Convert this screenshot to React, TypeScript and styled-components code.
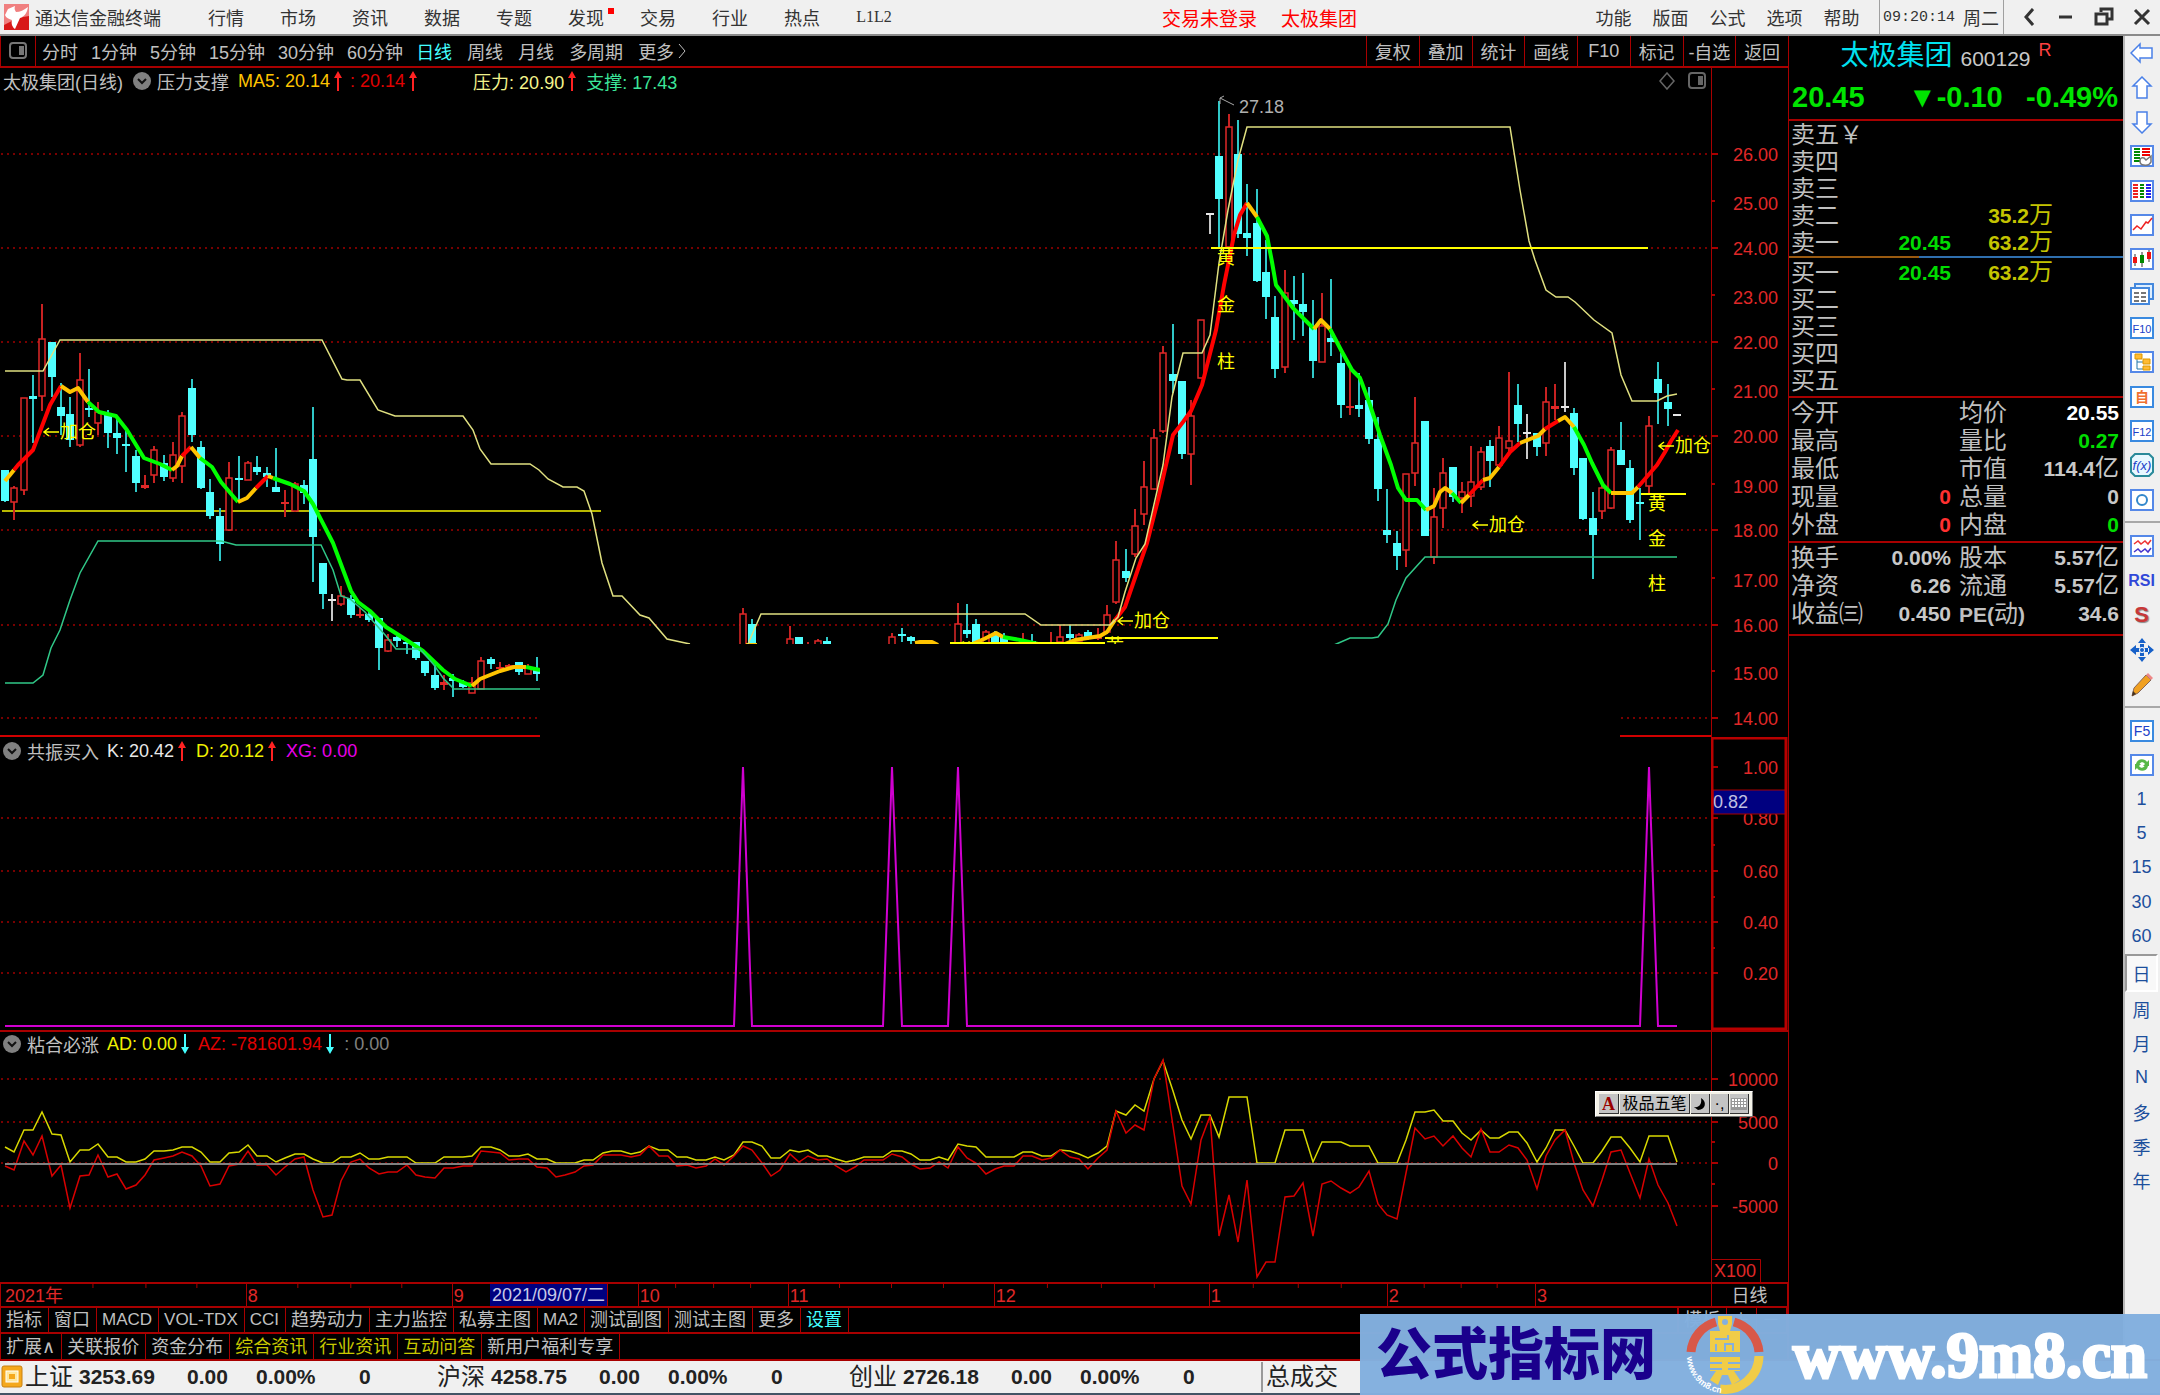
import React from "react";
import styled, { createGlobalStyle } from "styled-components";

const RED = "#a80000";
const sans = `"Liberation Sans", "Noto Sans CJK SC", sans-serif`;

const Global = createGlobalStyle`
  * { box-sizing: border-box; }
  body { margin: 0; background: #000; font-family: ${sans}; font-size: 18px; color: #c0c0c0; }
  button { font: inherit; color: inherit; background: none; border: 0; padding: 0; margin: 0; white-space: nowrap; cursor: pointer; }
  svg { display: block; }
  svg text { font-family: ${sans}; }
`;

/* ---------- data ---------- */

type Kind = "u" | "d" | "w";
// bar index, kind, body top, body bottom, wick top, wick bottom
type Candle = [number, Kind, number, number, number, number];

const CANDLES: Candle[] = [
  [0, "d", 470, 501, 470, 502], [1, "u", 488, 502, 486, 520], [2, "u", 398, 490, 398, 495], [3, "d", 396, 399, 375, 443],
  [4, "u", 339, 396, 304, 411], [5, "d", 342, 377, 342, 397], [6, "d", 407, 416, 383, 435], [7, "d", 414, 440, 397, 447],
  [8, "u", 380, 445, 353, 447], [9, "d", 408, 409, 369, 417], [10, "u", 412, 423, 402, 435], [11, "d", 415, 433, 410, 448],
  [12, "d", 433, 438, 418, 454], [13, "d", 444, 445, 430, 472], [14, "d", 456, 483, 450, 492], [15, "u", 485, 488, 475, 489],
  [16, "u", 450, 475, 446, 483], [17, "d", 463, 477, 455, 481], [18, "u", 455, 478, 442, 482], [19, "u", 416, 466, 412, 483],
  [20, "d", 388, 435, 379, 442], [21, "d", 447, 488, 441, 489], [22, "d", 492, 516, 479, 519], [23, "d", 516, 544, 508, 561],
  [24, "u", 478, 530, 462, 531], [25, "d", 478, 480, 456, 500], [26, "u", 463, 480, 461, 480], [27, "d", 467, 472, 456, 475],
  [28, "d", 473, 477, 467, 487], [29, "d", 487, 492, 448, 492], [30, "u", 502, 503, 490, 517], [31, "u", 484, 511, 482, 512],
  [32, "d", 485, 493, 480, 504], [33, "d", 459, 537, 407, 582], [34, "d", 563, 594, 563, 609], [35, "w", 599, 600, 594, 621],
  [36, "u", 596, 604, 586, 606], [37, "d", 599, 615, 595, 618], [38, "u", 614, 616, 608, 618], [39, "d", 614, 620, 612, 622],
  [40, "d", 618, 648, 618, 670], [41, "u", 640, 651, 634, 652], [42, "d", 637, 641, 636, 647], [43, "d", 642, 644, 640, 654],
  [44, "d", 642, 658, 642, 660], [45, "d", 661, 673, 661, 676], [46, "d", 675, 688, 665, 690], [47, "u", 682, 685, 675, 690],
  [48, "d", 678, 681, 674, 697], [49, "d", 682, 687, 680, 688], [50, "u", 683, 693, 677, 693], [51, "u", 661, 689, 657, 689],
  [52, "d", 659, 664, 657, 669], [53, "u", 667, 668, 662, 668], [54, "u", 665, 667, 664, 668], [55, "d", 662, 672, 662, 675],
  [56, "u", 668, 674, 664, 674], [57, "d", 669, 674, 657, 681],
  [79, "u", 614, 660, 608, 660], [80, "d", 624, 650, 619, 650], [84, "u", 639, 650, 626, 650], [85, "d", 637, 650, 637, 650],
  [86, "u", 648, 649, 642, 650], [87, "u", 641, 650, 639, 650], [88, "d", 641, 650, 637, 650], [95, "u", 637, 660, 633, 660],
  [96, "d", 634, 635, 628, 642], [97, "d", 637, 641, 636, 645], [102, "u", 624, 650, 603, 650], [103, "d", 630, 634, 604, 638],
  [104, "d", 624, 650, 619, 650], [105, "u", 632, 645, 630, 650], [106, "d", 635, 642, 631, 645], [107, "d", 636, 645, 633, 650],
  [109, "u", 640, 641, 633, 650], [110, "d", 641, 645, 634, 650], [112, "u", 644, 650, 632, 650], [113, "u", 637, 642, 625, 645],
  [114, "d", 634, 638, 625, 641], [115, "u", 635, 641, 633, 641], [116, "d", 632, 637, 630, 640], [117, "u", 637, 638, 628, 640],
  [118, "u", 615, 632, 605, 634], [119, "u", 560, 602, 541, 604], [120, "d", 571, 578, 549, 582], [121, "u", 526, 554, 509, 557],
  [122, "u", 487, 514, 461, 525], [123, "u", 438, 489, 429, 489], [124, "u", 353, 431, 346, 433], [125, "d", 374, 381, 324, 393],
  [126, "d", 381, 454, 381, 459], [127, "u", 416, 454, 400, 485], [128, "u", 320, 378, 320, 378], [129, "w", 213, 214, 213, 234],
  [130, "d", 156, 199, 101, 248], [131, "u", 127, 247, 114, 247], [132, "d", 154, 234, 120, 238], [133, "d", 233, 238, 184, 256],
  [134, "d", 223, 281, 189, 282], [135, "d", 272, 297, 240, 319], [136, "d", 317, 369, 296, 378], [137, "u", 293, 367, 270, 373],
  [138, "d", 300, 304, 276, 340], [139, "d", 304, 312, 273, 336], [140, "d", 327, 361, 300, 378], [141, "u", 326, 362, 293, 362],
  [142, "d", 338, 342, 279, 356], [143, "d", 363, 405, 353, 418], [144, "u", 406, 407, 367, 415], [145, "d", 405, 409, 373, 417],
  [146, "d", 400, 439, 387, 444], [147, "d", 439, 489, 417, 501], [148, "d", 530, 535, 489, 543], [149, "d", 543, 556, 531, 570],
  [150, "u", 474, 550, 474, 567], [151, "u", 443, 473, 397, 486], [152, "d", 421, 536, 421, 536], [153, "u", 517, 557, 488, 564],
  [154, "u", 473, 508, 458, 528], [155, "d", 467, 497, 467, 502], [156, "u", 492, 498, 482, 513], [157, "u", 482, 496, 446, 507],
  [158, "u", 452, 487, 447, 490], [159, "d", 446, 461, 440, 487], [160, "u", 438, 465, 426, 465], [161, "u", 441, 448, 372, 452],
  [162, "d", 405, 424, 384, 442], [163, "w", 432, 433, 414, 459], [164, "d", 433, 447, 433, 456], [165, "u", 402, 443, 387, 456],
  [166, "u", 406, 409, 384, 420], [167, "w", 406, 407, 362, 412], [168, "d", 413, 468, 408, 475], [169, "d", 458, 519, 458, 520],
  [170, "d", 518, 535, 492, 579], [171, "u", 488, 511, 482, 519], [172, "u", 450, 508, 447, 509], [173, "d", 450, 465, 422, 465],
  [174, "d", 468, 520, 460, 523], [175, "d", 502, 503, 488, 540], [176, "u", 426, 486, 416, 493], [177, "d", 379, 393, 362, 424],
  [178, "d", 402, 409, 384, 426], [179, "w", 414, 415, 414, 415],
];

const MA: [string, string][] = [
  ["#ffc400", "5,481 14,470"],
  ["#f00", "14,470 18,465 33,450 50,405 61,386"],
  ["#ffc400", "61,386 70,392 78,388 88,402"],
  ["#0f0", "88,402 99,412 116,416 127,430 144,458 160,464 172,470"],
  ["#ffc400", "172,470 177,466 182,456"],
  ["#f00", "182,456 191,447"],
  ["#ffc400", "191,447 200,458"],
  ["#0f0", "200,458 212,467 221,482 238,502"],
  ["#ffc400", "238,502 247,498 256,488"],
  ["#f00", "256,488 268,476"],
  ["#ffc400", "268,476 273,478"],
  ["#0f0", "273,478 290,484 304,491 313,504 333,543 351,591 358,602 370,611 386,627 405,639 423,651 443,670 455,679 472,686"],
  ["#ffc400", "472,686 480,679 500,671 514,667 526,667"],
  ["#0f0", "526,667 540,670"],
  ["#ffc400", "746,645 757,645"],
  ["#ffc400", "915,643 920,642 932,642 938,645"],
  ["#ffc400", "970,645 984,639 996,633 1003,637"],
  ["#0f0", "1003,637 1020,640 1038,644"],
  ["#ffc400", "1062,645 1075,640 1100,636 1107,632 1115,620"],
  ["#f00", "1115,620 1125,607 1136,575 1147,543 1158,500 1166,465 1173,435 1183,422 1191,411 1202,385 1216,330 1224,285 1234,235 1240,215 1247,203"],
  ["#ffc400", "1247,203 1257,217"],
  ["#0f0", "1257,217 1267,236 1272,262 1276,285 1293,308 1305,320 1314,329"],
  ["#ffc400", "1314,329 1321,320 1330,329"],
  ["#0f0", "1330,329 1341,350 1352,370 1360,378 1369,402 1380,435 1391,465 1398,488 1406,500 1417,500 1426,510"],
  ["#ffc400", "1426,510 1434,506 1440,492 1445,488 1452,493"],
  ["#0f0", "1452,493 1461,503"],
  ["#ffc400", "1461,503 1469,495"],
  ["#f00", "1469,495 1483,480"],
  ["#ffc400", "1483,480 1490,478 1499,467"],
  ["#f00", "1499,467 1510,452 1520,443"],
  ["#ffc400", "1520,443 1538,436 1545,429"],
  ["#f00", "1545,429 1558,421"],
  ["#ffc400", "1558,421 1565,417 1574,427"],
  ["#0f0", "1574,427 1584,445 1592,463 1603,485 1611,493"],
  ["#ffc400", "1611,493 1632,493 1638,487"],
  ["#f00", "1638,487 1657,465 1665,452 1671,441 1678,430"],
];

const PRESSURE = [
  "5,371 43,371 60,340 322,340 342,379 347,380 360,380 378,410 395,416 463,416 473,430 480,449 491,464 530,464 539,470 548,479 563,487 577,487 584,491 592,514 602,563 613,596 622,596 640,615 649,618 667,639 690,644",
  "748,644 761,614 1025,614 1041,625 1110,625 1118,617 1125,592 1136,558 1145,544 1155,500 1163,465 1172,397 1183,353 1202,353 1210,335 1219,263 1228,210 1238,160 1247,127 1510,127 1520,190 1529,241 1535,260 1546,290 1556,297 1568,297 1575,302 1594,320 1612,333 1621,375 1632,401 1657,401 1667,396 1677,394",
];
const SUPPORT = [
  "5,683 33,683 43,675 51,648 60,630 70,600 80,573 98,541 221,541 236,545 321,545 333,570 341,596 350,599 365,612 386,636 396,649 420,649 434,665 443,678 454,689 540,689",
  "1334,645 1350,638 1372,638 1378,637 1388,624 1396,600 1406,578 1425,557 1677,557",
];

const AD = [
  48, 32, 98, 98, 153, 86, 84, 2, 40, 40, 57, 18, 17, 2, 2, 12, 36, 37, 40, 48, 48, 32, 2, 2, 30, 32, 53, 22, 22, 2,
  15, 26, 27, 13, 0, 0, 17, 18, 30, 13, 13, 17, 17, 17, 0, 0, 0, 17, 17, 17, 20, 48, 48, 38, 22, 22, 26, 13, 13, 0,
  0, 0, 9, 9, 30, 36, 36, 26, 32, 52, 40, 39, 17, 17, 10, 10, 17, 10, 24, 62, 62, 50, 14, 14, 40, 32, 40, 22, 22, 12,
  2, 8, 17, 17, 17, 36, 36, 26, 8, 8, 18, 8, 58, 50, 48, 17, 17, 17, 17, 32, 32, 22, 22, 40, 37, 28, 14, 30, 50, 157,
  145, 175, 155, 252, 305, 215, 130, 72, 143, 143, 77, 198, 198, 198, 0, 0, 0, 98, 98, 98, 2, 62, 62, 62, 50, 50, 50, 0, 0, 0,
  70, 152, 152, 160, 127, 127, 90, 68, 100, 75, 75, 94, 94, 60, 2, 45, 98, 98, 50, 0, 0, 35, 77, 77, 45, 2, 81, 81, 81, 2,
];
const AZ = [
  -10, -22, 67, 23, 80, -40, -5, -136, -40, -35, 25, -41, -32, -78, -67, -35, 8, 14, 20, 32, 22, -10, -68, -64, -10, -4, 36, -5, -5, -37,
  -12, 13, 17, -80, -162, -155, -55, 3, 13, -15, -33, -27, -28, -6, -37, -42, -46, -15, -15, -10, -10, 36, 34, 30, 10, 12, 12, -13, -15, -41,
  -36, -28, -10, -6, 25, 25, 24, 17, 25, 52, 22, 22, -10, -6, -15, -10, 12, -5, 22, 52, 38, 0, -38, -22, 27, 2, 22, 10, 12, -8,
  -28, -12, 9, 9, 9, 27, 18, -4, -19, -14, 3, -14, 48, 14, 0, -32, -18, -10, -8, 22, 22, 10, 14, 40, 18, 12, -18, 14, 40, 157,
  90, 115, 98, 252, 308, 110, -68, -122, 70, 140, -220, -95, -238, -50, -342, -297, -297, -103, -98, -60, -220, -63, -55, -75, -91, -73, -23, -122, -157, -167,
  -30, 106, 72, 80, 50, 80, 45, 18, 102, 32, 32, 54, 45, 8, -77, 20, 68, 98, 0, -80, -130, -50, 32, 40, -30, -104, 12, -65, -120, -190,
];

const barX = (i: number) => Math.round(5 + i * 9.34);
const seriesPoints = (v: number[]) => v.map((n, i) => `${barX(i)},${Math.round(1163 - n / 3)}`).join(" ");
const SPIKES = [79, 95, 102, 176];
const spikePoints = ["5,1026", ...SPIKES.flatMap((i) => [`${barX(i - 1)},1026`, `${barX(i)},767`, `${barX(i + 1)},1026`]), "1677,1026"].join(" ");

/* ---------- frame ---------- */

const Shell = styled.div`display: flex; flex-direction: column; min-height: 100vh; background: #000; position: relative;`;
const Body = styled.div`display: flex; flex: 1;`;
const Main = styled.main`flex: 1; min-width: 0;`;

const MenuBar = styled.header`
  display: flex; align-items: center; height: 36px; background: #f0f0f0; color: #333;
  border-bottom: 2px solid #8a8a8a;
`;
const Brand = styled.div`display: flex; align-items: center; gap: 6px; width: 190px; padding-left: 4px; white-space: nowrap;`;
const MenuItem = styled.button<{ $w?: number }>`width: ${(p) => p.$w ?? 72}px; position: relative;`;
const LatinItem = styled(MenuItem)`font: 16px "Liberation Serif", serif;`;
const Dot = styled.i`position: absolute; top: 4px; right: 8px; width: 6px; height: 6px; background: #f00;`;
const Alerts = styled.div`display: flex; gap: 24px; flex: 1; justify-content: center; color: #f00; font-size: 19px; padding-left: 24px;`;
const Clock = styled.div`
  display: flex; align-items: center; gap: 8px; align-self: stretch; width: 125px; padding-left: 3px; margin-left: 9px;
  border-left: 1px solid #a0a0a0; border-right: 1px solid #a0a0a0; white-space: nowrap;
`;
const Time = styled.time`font: 15px "Liberation Mono", monospace;`;
const WinButtons = styled.div`display: flex; justify-content: space-around; width: 156px; padding-left: 6px;`;

const Toolbar = styled.nav`
  display: flex; height: 32px; border-bottom: 2px solid ${RED}; border-left: 1px solid ${RED};
`;
const PanelToggle = styled.button`width: 35px; border-right: 1px solid ${RED}; display: grid; place-items: center;`;
const Periods = styled.div<{ $gap: number }>`display: flex; align-items: center; gap: ${(p) => p.$gap}px; padding-left: ${(p) => (p.$gap === 13 ? 6 : 13)}px;`;
const Period = styled.button<{ $on?: boolean }>`display: flex; align-items: center; gap: 4px; color: ${(p) => (p.$on ? "#4ff" : "#c0c0c0")};`;
const Actions = styled.div`display: flex; width: 422px; margin-left: auto;`;
const Action = styled.button`flex: 1; border-left: 1px solid ${RED};`;

const Panel = styled.section<{ $line?: boolean }>`
  display: grid; grid-template-columns: minmax(0, 1fr) 77px; position: relative;
  ${(p) => p.$line && `border-top: 2px solid ${RED};`}
`;
const Plot = styled.div`min-width: 0;`;
const PlotHead = styled.div<{ $h: number }>`
  display: flex; align-items: center; height: ${(p) => p.$h}px; padding-left: 3px; white-space: nowrap;
`;
const Read = styled.span<{ $c?: string; $gap?: number }>`
  color: ${(p) => p.$c ?? "#c0c0c0"}; margin-left: ${(p) => p.$gap ?? 0}px;
`;
const HeadTools = styled.div`display: flex; gap: 12px; margin-left: auto; padding-right: 5px;`;
const Canvas = styled.svg`width: 100%; height: auto;`;

/* ---------- bottom ---------- */

const DateAxis = styled.div`
  display: grid; grid-template-columns: minmax(0, 1fr) 77px; height: 24px; position: relative;
  border-top: 2px solid ${RED}; border-left: 1px solid ${RED}; line-height: 24px;
`;
const Months = styled.div`display: flex; color: #e02828;`;
const Month = styled.div<{ $n: number }>`
  flex: ${(p) => p.$n} 0 0; min-width: 0; text-indent: 1px;
  & + & { border-left: 1px solid ${RED}; }
  &:first-child { text-indent: 4px; }
`;
const AxisMode = styled.div`border-left: 1px solid ${RED}; border-right: 1px solid ${RED}; text-align: center;`;
const Ticks = styled.svg`position: absolute; left: 0; top: 0; width: 100%; height: 4px;`;
const CursorDate = styled.div`
  position: absolute; left: 489px; top: 0; width: 118px; height: 22px; line-height: 22px; text-align: center;
  background: #000080; color: #c8c8e8; border-right: 1px solid ${RED}; white-space: nowrap;
`;
const Tabs = styled.nav<{ $h: number }>`
  display: flex; height: ${(p) => p.$h}px; border-top: 2px solid ${RED}; border-right: 1px solid ${RED}; border-left: 1px solid ${RED};
`;
const Tab = styled.button<{ $c?: string; $latin?: boolean }>`
  padding: 0 6px 0 5px; border-right: 1px solid ${RED}; color: ${(p) => p.$c ?? "#c0c0c0"};
  font-family: "Liberation Sans", "DejaVu Sans", "Noto Sans CJK SC", sans-serif;
  font-size: ${(p) => (p.$latin ? 17 : 18)}px; line-height: 22px;
`;
const TabsEnd = styled.div`display: flex; margin-left: auto; border-left: 2px solid ${RED};`;

const Status = styled.footer`
  display: flex; align-items: center; height: 36px; background: #f0f0f0; color: #222; border-top: 2px solid ${RED};
  border-bottom: 2px solid #456; padding-left: 1px; font-weight: bold; font-size: 21px; white-space: nowrap;
`;
const IndexQuote = styled.div`
  display: grid; grid-template-columns: 54px 108px 69px 103px 78px; align-items: center; width: 412px;
`;
const Cjk = styled.span`font-size: 24px; font-weight: normal; line-height: 30px; td & { line-height: 0; }`;
const Turnover = styled.div`border-left: 2px solid #999; padding-left: 3px;`;

/* ---------- quote panel ---------- */

const Quote = styled.aside`width: 335px; border-left: 1px solid ${RED};`;
const Title = styled.h1`
  display: flex; align-items: center; justify-content: center; gap: 8px; height: 40px; margin: 0; padding-right: 20px;
  font-weight: normal; white-space: nowrap;
`;
const StockName = styled.span`font-size: 28px; line-height: 36px; color: #00e0f0;`;
const Code = styled.span`font-size: 21px; color: #c8c8c8; padding-top: 5px;`;
const Mark = styled.sup`font-size: 18px; color: #ff4040; line-height: 18px; align-self: flex-start; padding-top: 5px;`;
const Prices = styled.div`
  display: flex; justify-content: space-between; align-items: center; height: 43px; padding: 0 5px 0 3px;
  color: #00e400; font-size: 29px; font-weight: bold;
`;
const Change = styled.span`padding-left: 20px;`;
const Table = styled.table<{ $row: number }>`
  width: 100%; table-layout: fixed; border-collapse: collapse; font-size: 21px; font-weight: bold;
  tr { height: ${(p) => p.$row}px; }
  th, td { padding: 0; line-height: ${(p) => p.$row}px; white-space: nowrap; }
  th { font-size: 24px; font-weight: normal; text-align: left; }
`;
const Block = styled.div<{ $pt?: number; $pb?: number }>`
  border-top: 2px solid ${RED}; padding: ${(p) => p.$pt ?? 0}px 4px ${(p) => p.$pb ?? 0}px 2px;
`;
const Bids = styled(Block)`
  border-top: 2px solid; border-image: linear-gradient(90deg, #9a5a10 39%, #2f6fae 39%) 1;
`;
const End = styled.div`border-top: 2px solid ${RED};`;
const Num = styled.td<{ $c?: string }>`text-align: right; color: ${(p) => p.$c ?? "#c8c8c8"};`;
const StatName = styled.th`&& { padding-left: 8px; } b { font-size: 21px; line-height: 0; }`;
const PriceCol = styled.col`width: 80px;`;
const VolumeCol = styled.col`width: 102px;`;

/* ---------- tool rail ---------- */

const Rail = styled.nav`width: 37px; background: #f0f0f0; border-left: 2px solid #b8b8b8; color: #1c4f9c;`;
const RailGroup = styled.div<{ $h: number }>`
  display: flex; flex-direction: column; height: ${(p) => p.$h}px; padding-right: 2px;
  & + & { border-top: 2px solid #a8a8a8; margin-top: 4px; padding-top: 6px; }
`;
const RailButton = styled.button<{ $on?: boolean }>`
  flex: 1; display: grid; place-items: center; width: 100%; color: #1c4f9c;
  ${(p) => p.$on && `background: #f8f8f8; border: 2px solid #fff; border-top-color: #999; border-left-color: #999;`}
`;
const RailWord = styled.span`font-size: 16px; font-weight: bold; color: #3048d8;`;
const RailLetter = styled.b`
  font-size: 22px; line-height: 26px; color: #c83838; text-shadow: 1px 1px 1px #888;
`;

/* ---------- overlays ---------- */

const Ime = styled.div`
  position: absolute; right: 35px; top: 59px; display: flex; gap: 1px; height: 26px; padding: 2px 3px;
  background: #f4f2e8; border: 1px solid #fff; border-right-color: #777; border-bottom-color: #777; color: #000;
`;
const ImeButton = styled.button<{ $w: number }>`
  width: ${(p) => p.$w}px; height: 20px; display: grid; place-items: center; background: #c4c4c4; font-size: 16px; line-height: 18px;
  border-right: 1px solid #333; border-bottom: 1px solid #333;
`;
const ImeLetter = styled.b`font: bold 18px "Liberation Serif", serif; line-height: 18px; color: #900;`;
const Banner = styled.div`
  position: absolute; right: 0; bottom: 0; width: 800px; height: 81px; background: rgba(131, 175, 222, 0.98);
  display: flex; align-items: center; padding: 0 13px 0 16px; justify-content: space-between; white-space: nowrap;
`;
const BannerName = styled.span`font-size: 56px; line-height: 76px; font-weight: 900; color: #1a008c;`;
const BannerUrl = styled.a`
  font: bold 65px "Liberation Serif", serif; line-height: 76px; color: #fff; text-decoration: none; -webkit-text-stroke: 3px #fff;
`;

/* ---------- small drawings ---------- */

const Arrow = ({ down, gap = 3 }: { down?: boolean; gap?: number }) => (
  <svg width={9 + gap} height="20" viewBox={`${-gap} 0 ${9 + gap} 20`}>
    {down ? <path d="M4 0h2v13h3l-4 7-4-7h3z" fill="#4ff" /> : <path d="M4 20h2V7h3L5 0 1 7h3z" fill="#f22" />}
  </svg>
);
const Chevron = () => (
  <svg width="18" height="18" viewBox="0 0 18 18">
    <circle cx="9" cy="9" r="9" fill="#808080" /><path d="M5 7l4 4 4-4" fill="none" stroke="#111" strokeWidth="2" />
  </svg>
);
const SplitIcon = ({ c = "#777" }: { c?: string }) => (
  <svg width="18" height="18" viewBox="0 0 18 18">
    <rect x="1" y="1" width="16" height="15" rx="3" fill="none" stroke={c} strokeWidth="2" /><path d="M10 4h5v9h-5z" fill={c} />
  </svg>
);
const Brandmark = () => (
  <svg width="25" height="26" viewBox="0 0 25 26">
    <path d="M0 0h25v26H0z" fill="#d81818" /><path d="M0 0h25v12Q14 13 0 21z" fill="#f08080" />
    <path d="M1 11L4 5l7-3c-1 3 0 4 1 6 4 0 8-2 12-5-1 6-3 9-8 11l-5 11c-3-2-4-6-3-9-3-1-6-2-7-5z" fill="#fff" />
  </svg>
);

const Frame = ({ children, c = "#5588e8" }: { children?: React.ReactNode; c?: string }) => (
  <svg width="24" height="24" viewBox="0 0 24 24">
    <rect x="1" y="2" width="22" height="20" fill="#fff" stroke={c} strokeWidth="2" />{children}
  </svg>
);
const Dashes = ({ x, c, y = 6, w = 5 }: { x: number; c: string; y?: number; w?: number }) => (
  <path d={[0, 3, 6, 9, 12].map((d) => `M${x} ${y + d}h${w}`).join("")} stroke={c} strokeWidth="2" />
);
const ArrowBox = ({ r }: { r: number }) => (
  <svg width="24" height="24" viewBox="0 0 24 24">
    <path d="M12 1l9 9h-4v12H7V10H3z" transform={`rotate(${r} 12 12)`} fill="#fff" stroke="#4a80e8" strokeWidth="1.5" />
  </svg>
);
const glyph = (t: string, c = "#2040c8") => (
  <Frame c="#3a8ae0"><text x="12" y="17" fontSize={t.length > 2 ? 11 : 14} textAnchor="middle" fill={c} fontWeight={t === "自" ? 700 : 400}>{t}</text></Frame>
);

const RAIL_TOP: [string, React.ReactNode][] = [
  ["后退", <ArrowBox r={-90} />],
  ["上翻", <ArrowBox r={0} />],
  ["下翻", <ArrowBox r={180} />],
  ["自选报价", <Frame><Dashes x={4} c="#080" y={5} w={6} /><path d="M12 5h8M12 8h8M12 11h8" stroke="#e00" strokeWidth="2" /><path d="M10 17q0-4 4-3l2 2 5-4v6q-2 4-7 3-4 0-4-4z" fill="#fff" stroke="#777" strokeWidth="1.5" /></Frame>],
  ["行情表", <Frame><Dashes x={3} c="#e22" /><Dashes x={10} c="#080" w={4} /><Dashes x={16} c="#22e" /></Frame>],
  ["分时图", <Frame><path d="M3 17l4-4 4 3 5-7 2 1 4-5" fill="none" stroke="#e22" strokeWidth="1.5" /></Frame>],
  ["K线图", <Frame><path d="M5 7v12M12 5v15M19 3v12" stroke="#333" /><path d="M3 10h4v6H3zM17 5h4v7h-4z" fill="#e11" /><path d="M10 8h4v8h-4z" fill="#080" /></Frame>],
  ["多窗口", <svg width="26" height="24" viewBox="0 0 26 24"><rect x="6" y="2" width="18" height="15" fill="#def" stroke="#48d" strokeWidth="2" /><rect x="2" y="6" width="18" height="16" fill="#fff" stroke="#48d" strokeWidth="2" /><path d="M5 11h5m2 0h5M5 15h5m2 0h5M5 19h5m2 0h5" stroke="#777" strokeWidth="2" /></svg>],
  ["F10", glyph("F10")],
  ["树形", <Frame><path d="M7 8v11h7M7 12h7" fill="none" stroke="#27a" /><path d="M5 4h7v5H5zM13 9h7v5h-7zM13 16h7v4h-7z" fill="#fb3" stroke="#d90" /></Frame>],
  ["自选", glyph("自", "#f07030")],
  ["F12", glyph("F12")],
  ["公式", <svg width="24" height="24" viewBox="0 0 24 24"><path d="M5 1h14l4 4v14l-4 4H5l-4-4V5z" fill="#e8f8ff" stroke="#2a8a9a" strokeWidth="2" /><text x="12" y="17" fontSize="13" fontStyle="italic" textAnchor="middle" fill="#2040c8">f(x)</text></svg>],
  ["循环", <Frame><circle cx="12" cy="12" r="5" fill="none" stroke="#38c" strokeWidth="2" /></Frame>],
];
const RAIL_MID: [string, React.ReactNode][] = [
  ["指标", <Frame><path d="M4 10l4-3 3 3 4-3 3 3 3-4" fill="none" stroke="#e33" strokeWidth="1.5" /><path d="M4 18l4-3 3 3 4-3 3 3 3-4" fill="none" stroke="#43c" strokeWidth="1.5" /></Frame>],
  ["RSI", <RailWord>RSI</RailWord>],
  ["资金", <RailLetter>S</RailLetter>],
  ["移动", <svg width="24" height="24" viewBox="0 0 24 24"><path d="M12 0l4 5H8zM12 24l4-5H8zM0 12l6-5v10zM24 12l-6-5v10zM10 6h4v12h-4zM5 10h14v4H5z" fill="#1660c8" /><circle cx="12" cy="12" r="3" fill="#fff" /><circle cx="12" cy="12" r="2" fill="#1660c8" /></svg>],
  ["画线", <svg width="24" height="26" viewBox="0 0 24 26"><path d="M2 24l2-8L16 3l5 5L8 21z" fill="#f0a020" stroke="#865" /><path d="M16 3l2-2 5 5-2 2z" fill="#e88" /><path d="M2 24l1-5 3 3z" fill="#432" /></svg>],
];
const RAIL_LOW: [string, React.ReactNode][] = [
  ["F5", glyph("F5")],
  ["刷新", <Frame><path d="M6 11c1-6 9-6 11-2l2-2v6h-6l2-2c-2-3-5-2-6 1zM18 13c-1 6-9 6-11 2l-2 2v-6h6l-2 2c2 3 5 2 6-1z" fill="#58b848" /></Frame>],
  ...["1", "5", "15", "30", "60", "日", "周", "月", "N", "多", "季", "年"].map((t): [string, React.ReactNode] => [t, t]),
];

const Logo = () => (
  <svg width="78" height="78" viewBox="-39 -39 78 78">
    <path d="M-34 -3A34 34 0 0 1 -9 -33M9 -33A34 34 0 0 1 34 -3" fill="none" stroke="#d85848" strokeWidth="9" />
    <path d="M34 1A34 34 0 0 1 -5 34" fill="none" stroke="#f0cc48" strokeWidth="9" />
    <path d="M-7 -39H7V-31L5 -24H15V-3H-15V-24H-5L-7 -31zM-15 2H15V16h-6l6 9-8 5-4-10h-6l-4 10-8-5 6-9h-6z" fill="#f0cc48" />
    <circle cy="-33" r="3" fill="#83afde" />
    <path d="M-10 -16h13v-4M-9 -4v-7M0 -4v-7h8v7M-15 8h12m6 0h12M-15 14H-3m6 0h12" fill="none" stroke="#83afde" strokeWidth="2" />
    <path id="logoArc" d="M-38 2A38 38 0 0 0 -4 38" fill="none" />
    <text fontSize="9" fontWeight="700" fill="#fff"><textPath href="#logoArc">www.9m8.cn</textPath></text>
  </svg>
);

/* ---------- charts ---------- */

const Grid = ({ ys, from = 1, to = 1711 }: { ys: number[]; from?: number; to?: number }) => (
  <path d={ys.map((y) => `M${from} ${y}H${to}`).join("")} stroke="#780000" strokeWidth="2" strokeDasharray="2 4" shapeRendering="crispEdges" />
);

const COLOR = { u: "#e02828", d: "#50ffff", w: "#e8e8e8" };
const WICK = { u: "#c82222", d: "#30c8c8", w: "#c8c8c8" };
const Bar = ({ c: [i, k, top, bottom, hi, lo] }: { c: Candle }) => {
  const x = barX(i), col = COLOR[k], h = bottom - top;
  const hollow = k === "u" && h > 3;
  return (
    <g>
      {hollow
        ? <path d={`M${x} ${hi}V${top}M${x} ${bottom}V${lo}`} stroke={WICK[k]} strokeWidth="2" />
        : <path d={`M${x} ${hi}V${lo}`} stroke={WICK[k]} strokeWidth="2" />}
      {hollow
        ? <rect x={x - 3} y={top} width="6" height={h} fill="#000" stroke={col} strokeWidth="1.5" />
        : <rect x={x - 4} y={top} width="8" height={Math.max(h, 2)} fill={col} />}
    </g>
  );
};

const AddMark = ({ x, y }: { x: number; y: number }) => (
  <g fill="#ff0">
    <path d={`M${x} ${y}h15M${x + 5} ${y - 4}l-5 4 5 4`} fill="none" stroke="#ff0" strokeWidth="1.5" />
    <text x={x + 16} y={y + 6} fontSize="18">加仓</text>
  </g>
);
const Pillar = ({ x, ys }: { x: number; ys: number[] }) => (
  <g fill="#ff0" fontSize="18" textAnchor="middle">{ys.map((y, i) => <text key={y} x={x} y={y + 7}>{"黄金柱"[i]}</text>)}</g>
);

const PriceChart = () => (
  <Canvas viewBox="0 94 1711 643">
    <Grid ys={[154, 248, 342, 436, 530, 625, 718]} />
    <path d="M2 511H601" stroke="#b8b800" strokeWidth="2" />
    <g>{CANDLES.map((c) => <Bar key={c[0]} c={c} />)}</g>
    {MA.map(([c, p], i) => <polyline key={i} points={p} fill="none" stroke={c} strokeWidth="4" strokeLinejoin="round" />)}
    {PRESSURE.map((p) => <polyline key={p} points={p} fill="none" stroke="#e0e080" strokeWidth="1.5" />)}
    {SUPPORT.map((p) => <polyline key={p} points={p} fill="none" stroke="#30c888" strokeWidth="1.5" />)}
    <path d="M1211 248H1648M1105 638H1218M950 643H1105M1641 494H1686" stroke="#ff0" strokeWidth="2" shapeRendering="crispEdges" />
    <AddMark x={44} y={432} />
    <AddMark x={1118} y={621} />
    <AddMark x={1473} y={525} />
    <AddMark x={1659} y={446} />
    <Pillar x={1226} ys={[257, 304, 361]} />
    <Pillar x={1657} ys={[503, 538, 583]} />
    <Pillar x={1115} ys={[645]} />
    <Pillar x={966} ys={[650]} />
    <path d="M1220 98l14 7M1220 98l4-2M1220 98v6" stroke="#aaa" fill="none" />
    <text x="1239" y="113" fontSize="18" fill="#b0b0b0">27.18</text>
    <rect x="540" y="644" width="1080" height="94" fill="#000" />
    <path d="M0 736H540M1620 736H1711" stroke="#d00000" strokeWidth="2" shapeRendering="crispEdges" />
  </Canvas>
);

const AxisLabel = ({ y, children }: { y: number; children: React.ReactNode }) => (
  <text x="1778" y={y + 7} textAnchor="end" fontSize="18" fill="#e02828">{children}</text>
);
const tickPath = (ys: number[], len: number) => ys.map((y) => `M1711 ${y}h${len}`).join("");

const PRICE_Y = [154, 203, 248, 297, 342, 391, 436, 486, 530, 580, 625, 673, 718];
const PriceAxis = () => (
  <Canvas viewBox="1711 68 77 669">
    <path d="M1711.5 68V737" stroke={RED} />
    <path d={tickPath(PRICE_Y.filter((_, i) => i % 2 === 0), 7) + tickPath([201, 295, 389, 484, 578, 671], 4)} stroke={RED} strokeWidth="2" />
    {PRICE_Y.map((y, i) => <AxisLabel key={y} y={y}>{(26 - i).toFixed(2)}</AxisLabel>)}
  </Canvas>
);

const BUY_Y = [767, 818, 871, 922, 973];
const BuyAxis = () => (
  <Canvas viewBox="1711 737 77 293">
    <path d={tickPath(BUY_Y, 7) + tickPath([845, 897, 948], 4)} stroke={RED} strokeWidth="2" />
    {BUY_Y.map((y, i) => <AxisLabel key={y} y={y}>{(1 - i * 0.2).toFixed(2)}</AxisLabel>)}
    <rect x="1713" y="790" width="73" height="24" fill="#000080" stroke={RED} />
    <text x="1713" y="808" fontSize="18" fill="#c0c0e0">0.82</text>
    <rect x="1712" y="738" width="74" height="291" fill="none" stroke="#b80000" strokeWidth="3" />
  </Canvas>
);

const VolAxis = () => (
  <Canvas viewBox="1711 1032 77 250">
    <path d="M1711.5 1032V1282M1712 1259.5H1760.5V1282" fill="none" stroke={RED} />
    <path d={tickPath([1079, 1122, 1163, 1206], 7) + tickPath([1100, 1142, 1184], 4)} stroke={RED} strokeWidth="2" />
    <AxisLabel y={1079}>10000</AxisLabel>
    <AxisLabel y={1122}>5000</AxisLabel>
    <AxisLabel y={1163}>0</AxisLabel>
    <AxisLabel y={1206}>-5000</AxisLabel>
    <text x="1714" y="1277" fontSize="18" fill="#e02828">X100</text>
  </Canvas>
);

/* ---------- content ---------- */

const MONTHS: [string, number][] = [["2021年", 246], ["8", 206], ["9", 186], ["10", 150], ["11", 206], ["12", 215], ["1", 178], ["2", 148], ["3", 176]];
const TICKS = [92, 145, 196, 297, 350, 401, 675, 713, 750, 839, 891, 943, 1047, 1101, 1154, 1253, 1298, 1341, 1424, 1461, 1497];
const TABS = ["指标", "窗口", "MACD", "VOL-TDX", "CCI", "趋势动力", "主力监控", "私募主图", "MA2", "测试副图", "测试主图", "更多", "设置"];
const TABS2 = ["扩展∧", "关联报价", "资金分布", "综合资讯", "行业资讯", "互动问答", "新用户福利专享"];
const INDEXES = [["上证", "3253.69"], ["沪深", "4258.75"], ["创业", "2726.18"]];
type Row = [string, string, string];
const ASKS: Row[] = [["卖五￥", "", ""], ["卖四", "", ""], ["卖三", "", ""], ["卖二", "", "35.2"], ["卖一", "20.45", "63.2"]];
const BIDS: Row[] = [["买一", "20.45", "63.2"], ["买二", "", ""], ["买三", "", ""], ["买四", "", ""], ["买五", "", ""]];
type Stat = [string, string, string, string, string?, string?];
const STATS: Stat[] = [
  ["今开", "", "均价", "20.55", "", "#fff"],
  ["最高", "", "量比", "0.27", "", "#00dc00"],
  ["最低", "", "市值", "114.4亿"],
  ["现量", "0", "总量", "0", "#ff3030"],
  ["外盘", "0", "内盘", "0", "#ff3030", "#00dc00"],
];
const STATS2: Stat[] = [
  ["换手", "0.00%", "股本", "5.57亿"],
  ["净资", "6.26", "流通", "5.57亿"],
  ["收益㈢", "0.450", "PE(动)", "34.6"],
];

const withUnit = (s: string) => {
  const m = s.match(/^([\d.]+)([亿万])$/);
  return m ? <>{m[1]}<Cjk>{m[2]}</Cjk></> : s;
};

const Book = ({ rows }: { rows: Row[] }) => (
  <Table $row={27}>
    <colgroup><PriceCol /><PriceCol /><VolumeCol /><col /></colgroup>
    <tbody>
      {rows.map(([l, p, v]) => (
        <tr key={l}>
          <th scope="row">{l}</th><Num $c="#00dc00">{p}</Num><Num $c="#c4c400">{v && withUnit(v + "万")}</Num><td />
        </tr>
      ))}
    </tbody>
  </Table>
);
const Stats = ({ rows }: { rows: Stat[] }) => (
  <Table $row={28}>
    <colgroup><PriceCol /><PriceCol /><PriceCol /><col /></colgroup>
    <tbody>
      {rows.map(([a, av, b, bv, ac, bc]) => (
        <tr key={a}>
          <th scope="row">{a}</th><Num $c={ac || undefined}>{av}</Num>
          <StatName scope="row">{b.startsWith("PE") ? <><b>PE(</b>动<b>)</b></> : b}</StatName><Num $c={bc}>{withUnit(bv)}</Num>
        </tr>
      ))}
    </tbody>
  </Table>
);

const RailItems = ({ items }: { items: [string, React.ReactNode][] }) => (
  <>{items.map(([n, el]) => <RailButton key={n} aria-label={n} $on={n === "日"}>{el}</RailButton>)}</>
);

export default function App() {
  return (
    <Shell>
      <Global />
      <MenuBar>
        <Brand><Brandmark />通达信金融终端</Brand>
        {["行情", "市场", "资讯", "数据", "专题", "发现", "交易", "行业", "热点"].map((t) => (
          <MenuItem key={t}>{t}{t === "发现" && <Dot />}</MenuItem>
        ))}
        <LatinItem>L1L2</LatinItem>
        <Alerts><span>交易未登录</span><span>太极集团</span></Alerts>
        {["功能", "版面", "公式", "选项", "帮助"].map((t) => <MenuItem key={t} $w={57}>{t}</MenuItem>)}
        <Clock><Time>09:20:14</Time>周二</Clock>
        <WinButtons>
          <button aria-label="返回"><svg width="18" height="20" viewBox="0 0 18 20"><path d="M13 2L6 10l7 8" fill="none" stroke="#333" strokeWidth="3" /></svg></button>
          <button aria-label="最小化"><svg width="18" height="20" viewBox="0 0 18 20"><path d="M2 10h13" stroke="#333" strokeWidth="3" /></svg></button>
          <button aria-label="还原"><svg width="20" height="20" viewBox="0 0 20 20"><path d="M7 5V2h11v10h-4M2 7h11v10H2z" fill="none" stroke="#333" strokeWidth="3" /></svg></button>
          <button aria-label="关闭"><svg width="18" height="20" viewBox="0 0 18 20"><path d="M2 3l14 14M16 3L2 17" stroke="#333" strokeWidth="3" /></svg></button>
        </WinButtons>
      </MenuBar>

      <Body>
        <Main>
          <Toolbar>
            <PanelToggle aria-label="侧栏"><SplitIcon /></PanelToggle>
            <Periods $gap={13}>{["分时", "1分钟", "5分钟", "15分钟", "30分钟", "60分钟"].map((t) => <Period key={t}>{t}</Period>)}</Periods>
            <Periods $gap={15}>
              {["日线", "周线", "月线", "多周期"].map((t) => <Period key={t} $on={t === "日线"}>{t}</Period>)}
              <Period>更多<svg width="9" height="16" viewBox="0 0 9 16"><path d="M1 1l6 7-6 7" fill="none" stroke="#c0c0c0" /></svg></Period>
            </Periods>
            <Actions>{["复权", "叠加", "统计", "画线", "F10", "标记", "-自选", "返回"].map((t) => <Action key={t}>{t}</Action>)}</Actions>
          </Toolbar>

          <Panel>
            <Plot>
              <PlotHead $h={26}>
                <Read>太极集团(日线)</Read><Read $gap={10}><Chevron /></Read><Read $gap={6}>压力支撑</Read>
                <Read $c="#ffc400" $gap={9}>MA5: 20.14</Read><Arrow />
                <Read $c="#e00000" $gap={8}>: 20.14</Read><Arrow />
                <Read $c="#f4f48c" $gap={56}>压力: 20.90</Read><Arrow />
                <Read $c="#3ce69a" $gap={10}>支撑: 17.43</Read>
                <HeadTools>
                  <svg width="18" height="18" viewBox="0 0 18 18"><path d="M9 1l7 8-7 8-7-8z" fill="none" stroke="#666" strokeWidth="1.5" /></svg>
                  <SplitIcon c="#666" />
                </HeadTools>
              </PlotHead>
              <PriceChart />
            </Plot>
            <PriceAxis />
          </Panel>

          <Panel>
            <Plot>
              <PlotHead $h={28}>
                <Chevron /><Read $gap={6}>共振买入</Read>
                <Read $c="#e8e8e8" $gap={8}>K: 20.42</Read><Arrow />
                <Read $c="#f0f000" $gap={10}>D: 20.12</Read><Arrow />
                <Read $c="#e800e8" $gap={10}>XG: 0.00</Read>
              </PlotHead>
              <Canvas viewBox="0 765 1711 265">
                <Grid ys={BUY_Y.slice(1)} />
                <polyline points={spikePoints} fill="none" stroke="#d000d0" strokeWidth="2" />
              </Canvas>
            </Plot>
            <BuyAxis />
          </Panel>

          <Panel $line>
            <Plot>
              <PlotHead $h={24}>
                <Chevron /><Read $gap={6}>粘合必涨</Read>
                <Read $c="#f0f000" $gap={8}>AD: 0.00</Read><Arrow down />
                <Read $c="#e00000" $gap={9}>AZ: -781601.94</Read><Arrow down />
                <Read $c="#808080" $gap={10}>: 0.00</Read>
              </PlotHead>
              <Canvas viewBox="0 1056 1711 226">
                <Grid ys={[1079, 1122, 1163, 1206]} />
                <polyline points={seriesPoints(AD)} fill="none" stroke="#d8d800" strokeWidth="1.5" />
                <polyline points={seriesPoints(AZ)} fill="none" stroke="#d80000" strokeWidth="1.5" />
                <path d="M5 1164H1677" stroke="#808080" strokeWidth="2" />
              </Canvas>
            </Plot>
            <VolAxis />
            <Ime>
              <ImeButton $w={20}><ImeLetter>A</ImeLetter></ImeButton>
              <ImeButton $w={70}>极品五笔</ImeButton>
              <ImeButton $w={19} aria-label="半角"><svg width="14" height="14" viewBox="0 0 14 14"><path d="M8 1c6 3 5 12-3 12l-4-3c6 1 8-4 7-9z" /></svg></ImeButton>
              <ImeButton $w={18}>·,</ImeButton>
              <ImeButton $w={19} aria-label="软键盘"><svg width="16" height="12" viewBox="0 0 16 12"><rect width="16" height="12" fill="#999" /><path d="M1 2h14M1 5h14M1 8h14" stroke="#fff" strokeWidth="2" strokeDasharray="2 1" /></svg></ImeButton>
            </Ime>
          </Panel>

          <DateAxis>
            <Months>{MONTHS.map(([m, n]) => <Month key={m} $n={n}>{m}</Month>)}</Months>
            <AxisMode>日线</AxisMode>
            <Ticks viewBox="0 0 1788 4" preserveAspectRatio="none"><path d={TICKS.map((x) => `M${x} 0v4`).join("")} stroke={RED} /></Ticks>
            <CursorDate>2021/09/07/二</CursorDate>
          </DateAxis>
          <Tabs $h={26}>
            {TABS.map((t) => <Tab key={t} $latin={/^[A-Z]/.test(t)} $c={t === "设置" ? "#4ff" : undefined}>{t}</Tab>)}
            <TabsEnd><Tab>模板</Tab><Tab>＋</Tab><Tab>－</Tab></TabsEnd>
          </Tabs>
          <Tabs $h={27}>
            {TABS2.map((t) => <Tab key={t} $c={/资讯|问答/.test(t) ? "#c8c800" : undefined}>{t}</Tab>)}
          </Tabs>
        </Main>

        <Quote>
          <Title><StockName>太极集团</StockName><Code>600129</Code><Mark>R</Mark></Title>
          <Prices><span>20.45</span><Change>▼-0.10</Change><span>-0.49%</span></Prices>
          <Block><Book rows={ASKS} /></Block>
          <Bids $pt={1} $pb={2}><Book rows={BIDS} /></Bids>
          <Block $pt={1} $pb={2}><Stats rows={STATS} /></Block>
          <Block $pt={1} $pb={6}><Stats rows={STATS2} /></Block>
          <End />
        </Quote>

        <Rail>
          <RailGroup $h={481}><RailItems items={RAIL_TOP} /></RailGroup>
          <RailGroup $h={181}><RailItems items={RAIL_MID} /></RailGroup>
          <RailGroup $h={491}><RailItems items={RAIL_LOW} /></RailGroup>
        </Rail>
      </Body>

      <Status>
        <svg width="24" height="24" viewBox="0 0 24 24"><rect x="1" y="1" width="20" height="21" rx="2" fill="#f5a81c" stroke="#c88010" /><rect x="5" y="6" width="12" height="11" fill="#ffe8a0" stroke="#fff" /><rect x="8" y="9" width="6" height="5" fill="#f5a81c" /></svg>
        {INDEXES.map(([n, v]) => (
          <IndexQuote key={n}><Cjk>{n}</Cjk><span>{v}</span><span>0.00</span><span>0.00%</span><span>0</span></IndexQuote>
        ))}
        <Turnover><Cjk>总成交</Cjk></Turnover>
      </Status>

      <Banner>
        <BannerName>公式指标网</BannerName>
        <Logo />
        <BannerUrl href="#">www.9m8.cn</BannerUrl>
      </Banner>
    </Shell>
  );
}
